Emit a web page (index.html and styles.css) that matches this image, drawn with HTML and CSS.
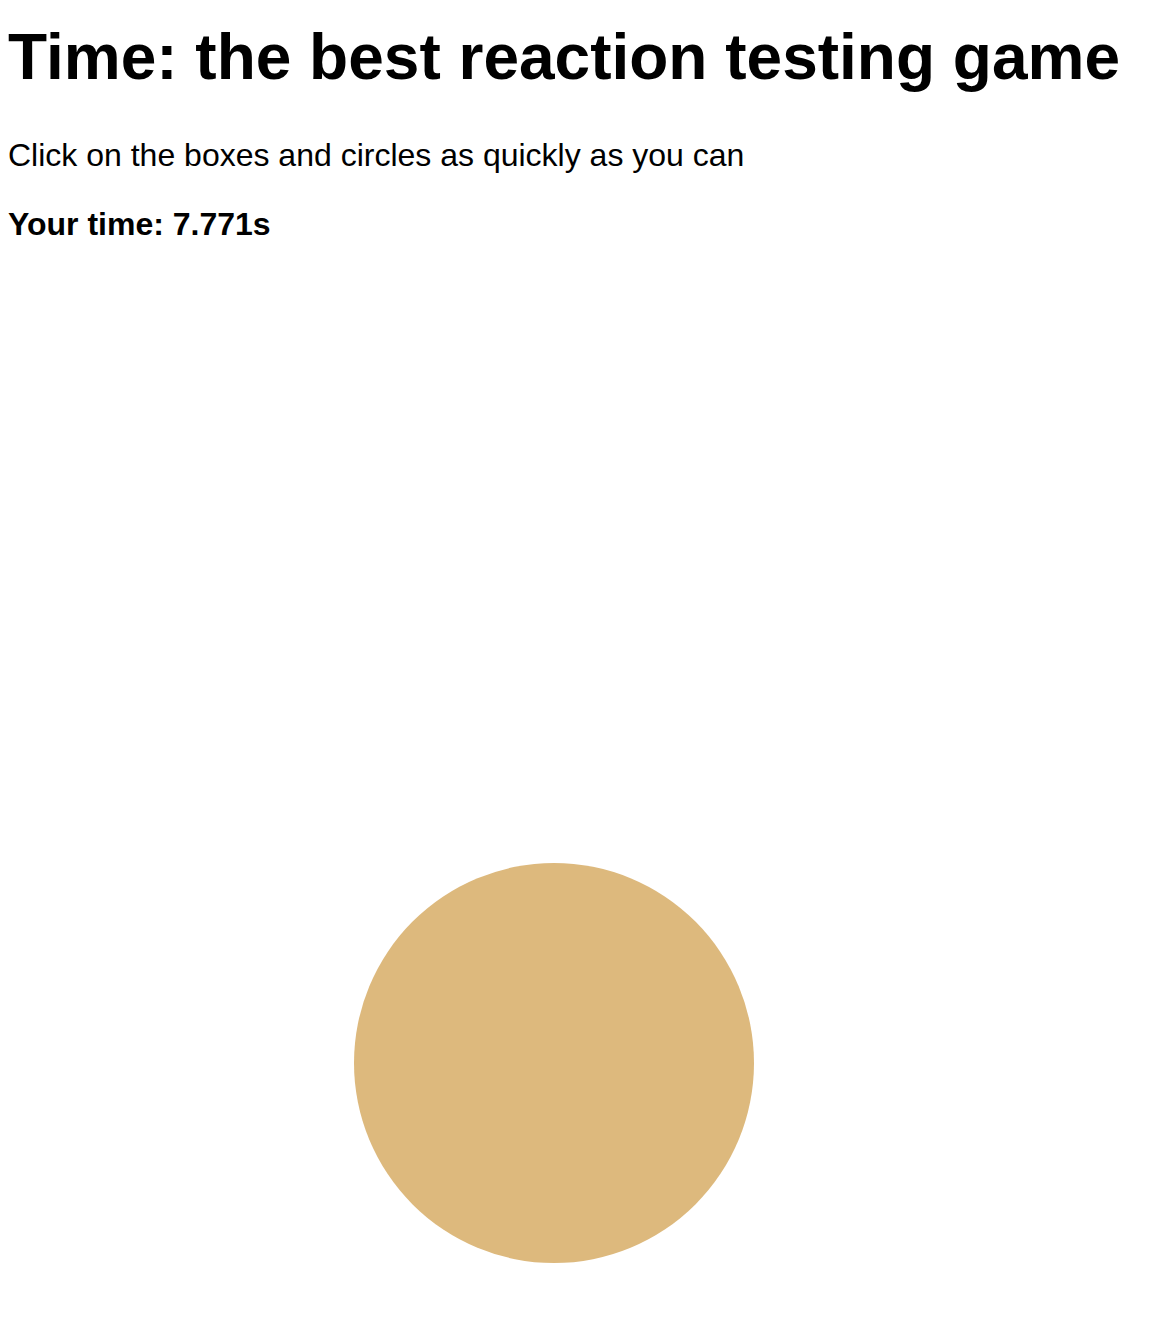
FILE: index.html
```html
<!DOCTYPE html>
<html lang="en">
<head>
<meta charset="utf-8">
<title>Time: the best reaction testing game</title>
<link rel="stylesheet" href="styles.css">
</head>
<body>
<h1 class="title">Time: the best reaction testing game</h1>
<p class="intro">Click on the boxes and circles as quickly as you can</p>
<p class="result">Your time: <span class="time">7.771s</span></p>
<div class="shape circle"></div>
</body>
</html>
```
FILE: styles.css
```css
html, body {
  background: #ffffff;
}
body {
  margin: 8px;
  font-family: "Liberation Sans", Arial, Helvetica, sans-serif;
  font-size: 32px;
  color: #000000;
}
.title {
  font-size: 64px;
  font-weight: bold;
  margin: 12px 0 43px;
}
.intro {
  margin: 0 0 32px;
}
.result {
  font-weight: bold;
  margin: 0;
}
.shape {
  position: absolute;
  width: 400px;
  height: 400px;
  background: #ddb97d;
}
.circle {
  left: 354px;
  top: 863px;
  border-radius: 50%;
}
```
